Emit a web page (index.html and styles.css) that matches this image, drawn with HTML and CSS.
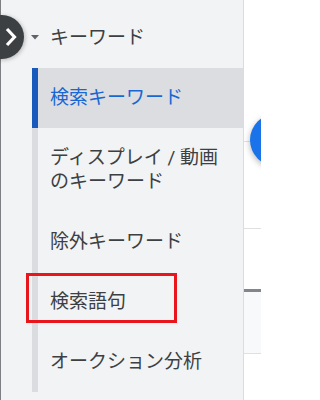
FILE: index.html
```html
<!DOCTYPE html>
<html lang="ja">
<head>
<meta charset="utf-8">
<link rel="stylesheet" href="styles.css">
</head>
<body>
<div class="page">
  <aside class="sidebar">
    <div class="toggle">
      <svg class="toggle-icon" width="44" height="44" viewBox="0 0 44 44"><polyline points="27,14 34.5,22 27,30" fill="none" stroke="#ffffff" stroke-width="3.2" stroke-linejoin="miter"/></svg>
    </div>
    <div class="group-head">
      <svg class="caret" width="8" height="5" viewBox="0 0 8 5"><polygon points="0,0 8,0 4,4.5" fill="#5f6368"/></svg>
      <span>キーワード</span>
    </div>
    <ul class="nav">
      <li class="item active">検索キーワード</li>
      <li class="item">ディスプレイ / 動画のキーワード</li>
      <li class="item">除外キーワード</li>
      <li class="item marked">検索語句<span class="mark"></span></li>
      <li class="item">オークション分析</li>
    </ul>
  </aside>
  <main class="main">
    <div class="sec sec-top"></div>
    <div class="sec sec-mid"></div>
    <div class="sec sec-gap"></div>
    <div class="sec sec-head"></div>
    <div class="fab"></div>
  </main>
</div>
</body>
</html>
```

FILE: styles.css
```css
* { box-sizing: border-box; }
html, body { margin: 0; padding: 0; background: #ffffff; }
body {
  font-family: "Roboto", "Noto Sans CJK JP", sans-serif;
  color: #3c4043;
  overflow: hidden;
}
.page {
  display: flex;
  width: 261px;
  height: 400px;
  position: relative;
}
.sidebar {
  position: relative;
  width: 244px;
  flex: none;
  height: 400px;
  background: #f1f3f4;
  border-left: 1px solid #7d7f82;
  border-right: 1px solid #dadce0;
  padding-top: 8px;
  z-index: 2;
}
.toggle {
  position: absolute;
  left: -21px;
  top: 15px;
  width: 44px;
  height: 44px;
  border-radius: 50%;
  background: #3c4043;
  box-shadow: 1px 1px 4px rgba(0,0,0,0.25);
}
.toggle-icon { display: block; }
.group-head {
  display: flex;
  align-items: center;
  height: 60px;
  padding-left: 30px;
  font-size: 19px;
  line-height: 24px;
}
.caret { flex: none; margin-right: 11px; margin-top: -1px; }
.nav {
  list-style: none;
  margin: 0 0 0 31px;
  padding: 0;
}
.item {
  position: relative;
  border-left: 6px solid #dadce0;
  padding: 18px 16px 18px 12px;
  font-size: 19px;
  line-height: 24px;
}
.item.active {
  border-left-color: #185abc;
  background: #dcdde0;
  color: #1967d2;
}
.mark {
  position: absolute;
  left: -12px;
  top: 1px;
  width: 151px;
  height: 50px;
  border: 3px solid #e8151d;
}
.main {
  position: relative;
  flex: 1;
  display: flex;
  flex-direction: column;
  background: #ffffff;
  overflow: hidden;
}
.sec-top { height: 142px; border-bottom: 1px solid #e0e0e0; }
.sec-mid { height: 87px; border-bottom: 1px solid #e0e0e0; }
.sec-gap { height: 60px; }
.sec-head {
  height: 65px;
  background: #f8f9fa;
  border-top: 3px solid #80868b;
  border-bottom: 1px solid #e0e0e0;
}
.fab {
  position: absolute;
  left: 6px;
  top: 114px;
  width: 52px;
  height: 52px;
  border-radius: 50%;
  background: #1a73e8;
  box-shadow: 0 2px 6px rgba(0,0,0,0.3);
}
```
